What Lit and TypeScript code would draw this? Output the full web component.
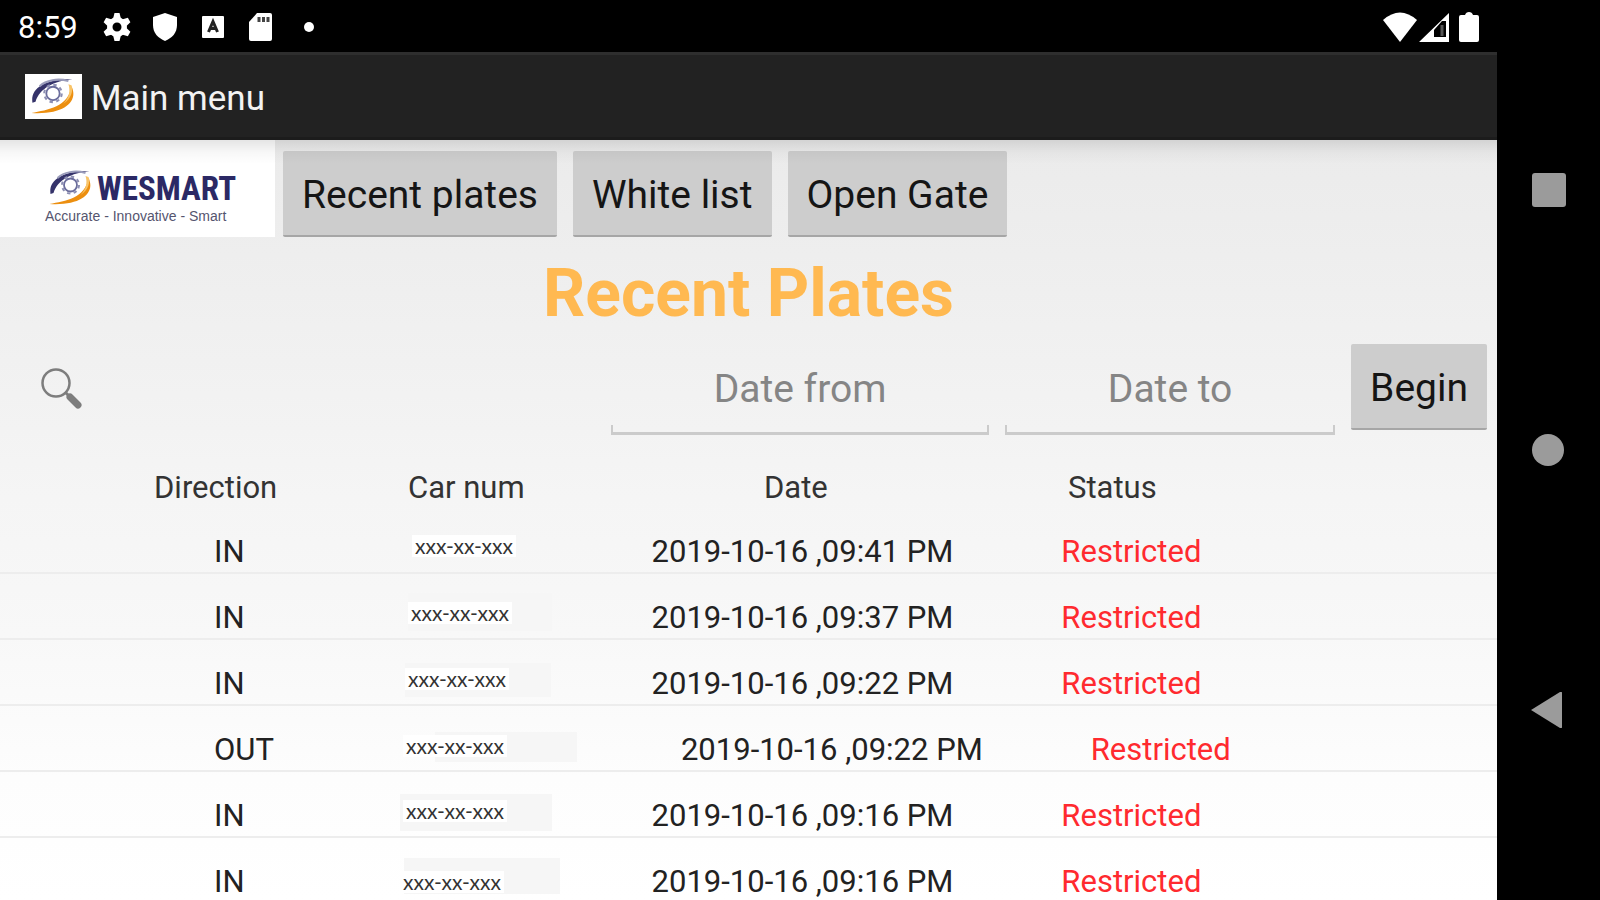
import { LitElement, html, css, svg } from "lit";
import { customElement, property } from "lit/decorators.js";
import { styleMap } from "lit/directives/style-map.js";

interface Plate {
  direction: string;
  plate: string;
  date: string;
  status: string;
  /* label: left/top of the masked number; patch: left, top, width, height of the mask */
  label: [number, number];
  patch: [number, number, number, number];
}

const MASK = "xxx-xx-xxx";

const PLATES: Plate[] = [
  { direction: "IN", plate: MASK, date: "2019-10-16 ,09:41 PM", status: "Restricted", label: [412, 27], patch: [412, 27, 97, 22] },
  { direction: "IN", plate: MASK, date: "2019-10-16 ,09:37 PM", status: "Restricted", label: [408, 28], patch: [408, 19, 144, 38] },
  { direction: "IN", plate: MASK, date: "2019-10-16 ,09:22 PM", status: "Restricted", label: [405, 28], patch: [405, 23, 146, 34] },
  { direction: "OUT", plate: MASK, date: "2019-10-16 ,09:22 PM", status: "Restricted", label: [403, 29], patch: [435, 26, 142, 30] },
  { direction: "IN", plate: MASK, date: "2019-10-16 ,09:16 PM", status: "Restricted", label: [403, 28], patch: [400, 22, 152, 37] },
  { direction: "IN", plate: MASK, date: "2019-10-16 ,09:16 PM", status: "Restricted", label: [400, 33], patch: [404, 20, 156, 36] },
];

const eye = svg`
  <path d="M1 24C-1 11 11 1 40 1C22 3 8 10 4 23Z" fill="#35336a"/>
  <path d="M8 8C14 2 26 0 36 3" fill="none" stroke="#9b9dbb" stroke-width="2"/>
  <circle cx="21" cy="15" r="8.500" fill="none" stroke="#8d8fb3" stroke-width="2" stroke-dasharray="3.340 3.340"/>
  <circle cx="21" cy="15" r="6.500" fill="none" stroke="#6b6d9c" stroke-width="1.800"/>
  <path d="M39 8C46 22 33 36 0 34C16 31 36 28 39 8Z" fill="#ec8f10"/>
  <path d="M36 6C38 12 37 19 31 25C39 20 41 12 39 7Z" fill="#f8c468"/>`;

@customElement("plate-table")
class PlateTable extends LitElement {
  @property({ attribute: false }) rows: Plate[] = [];

  static styles = css`
    :host { display: block; }
    table, thead, tbody { display: block; }
    tr { display: flex; position: relative; }
    th, td { padding: 0; font-size: 31px; line-height: 36px; font-weight: 400; text-align: left; white-space: nowrap; }
    thead tr { padding: 0 0 0 154px; height: 38px; color: #333; }
    .h-direction { width: 254px; }
    .h-car { width: 356px; }
    .h-date { width: 304px; }
    tbody tr { padding: 26px 0 2px 214px; border-bottom: 2px solid #ededed; color: #222; }
    .car { width: 407px; }
    .date { margin-right: 108px; }
    .status { color: #ff2a2f; }
    .patch { position: absolute; background: #f6f6f6; }
    .mask { position: absolute; padding: 0 3px; background: #fff; color: #333; font: 21px/22px Lato, sans-serif; }
  `;

  render() {
    return html`<table>
      <thead>
        <tr>
          <th class="h-direction">Direction</th>
          <th class="h-car">Car num</th>
          <th class="h-date">Date</th>
          <th>Status</th>
        </tr>
      </thead>
      <tbody>
        ${this.rows.map(
          (r) => html`<tr>
            <td>${r.direction}</td>
            <td class="car">
              <span class="patch" style=${styleMap({ left: `${r.patch[0]}px`, top: `${r.patch[1]}px`, width: `${r.patch[2]}px`, height: `${r.patch[3]}px` })}></span>
              <span class="mask" style=${styleMap({ left: `${r.label[0]}px`, top: `${r.label[1]}px` })}>${r.plate}</span>
            </td>
            <td class="date">${r.date}</td>
            <td class="status">${r.status}</td>
          </tr>`
        )}
      </tbody>
    </table>`;
  }
}

@customElement("app-root")
class AppRoot extends LitElement {
  static styles = css`
    :host { display: flex; height: 100vh; overflow: hidden; background: #000; font-family: Roboto, sans-serif; }
    * { box-sizing: border-box; }
    svg { display: block; }
    button, input { font: inherit; margin: 0; border: 0; border-radius: 0; }
    .screen { flex: 1; min-width: 0; display: flex; flex-direction: column; }
    .status-bar { flex: none; height: 52px; padding: 2px 18px 0; display: flex; align-items: center; color: #fff; font-size: 31px; line-height: 36px; }
    .clock { padding-top: 2px; }
    .notices { display: flex; gap: 20px; margin-left: 25px; }
    .signals { display: flex; align-items: center; gap: 2px; margin-left: auto; }
    .battery { margin-left: 8px; }
    .action-bar { flex: none; height: 88px; padding: 0 25px; display: flex; align-items: center; gap: 9px; background: #222; border-top: 3px solid #2e2e2e; border-bottom: 3px solid #1c1c1c; color: #f3f3f3; }
    .app-icon { width: 57px; height: 45px; padding: 4px 6px; background: #fff; }
    .app-name { margin: 0; padding-top: 6px; font-size: 35px; line-height: 40px; font-weight: 400; }
    .content { flex: 1; min-height: 0; overflow: hidden; position: relative; background: linear-gradient(#ebebeb, #efefef 20%, #f5f5f5 47%, #f8f8f8 65%, #fdfdfd 84%, #fff); }
    .content::before { content: ""; position: absolute; z-index: 1; inset: 0 0 auto; height: 24px; background: linear-gradient(rgba(0,0,0,.1), rgba(0,0,0,.03) 50%, transparent); pointer-events: none; }
    .toolbar { display: flex; align-items: flex-end; }
    .brand { width: 275px; height: 97px; margin-right: 8px; padding: 29px 0 0 45px; background: #fff; color: #2b2965; }
    .brand-top { display: flex; align-items: flex-end; gap: 4px; padding-left: 4px; height: 37px; }
    .brand-name { font: 700 33px/34px "Liberation Sans Narrow", "Roboto Condensed", Roboto, sans-serif; }
    .tagline { margin: 2px 0 0; font: 14px/16px "Liberation Sans", sans-serif; color: #55556f; white-space: nowrap; }
    .tabs { display: flex; gap: 16px; }
    .btn { height: 86px; padding: 4px 19px 0; background: #cdcdcd; border-bottom: 2px solid #a6a6a6; border-radius: 2px; color: #151515; font-size: 39px; line-height: 44px; white-space: nowrap; }
    h2 { margin: 18px 0 0; text-align: center; color: #ffb951; font-size: 66px; line-height: 78px; font-weight: 700; }
    .filters { display: flex; align-items: flex-start; gap: 16px; margin-top: 11px; padding-right: 10px; }
    .search { display: block; padding: 24px 41px; background: none; }
    .from { margin-left: auto; width: 378px; }
    .to { width: 330px; }
    .from, .to { height: 91px; padding: 2px 0 0; outline: 0; text-align: center; font-size: 39px; line-height: 44px; color: #222; border-bottom: 3px solid #cbcbcb;
      background: linear-gradient(#cbcbcb, #cbcbcb) left bottom / 2px 7px no-repeat, linear-gradient(#cbcbcb, #cbcbcb) right bottom / 2px 7px no-repeat; }
    input::placeholder { color: #858585; opacity: 1; }
    plate-table { margin-top: 35px; }
    .nav { flex: none; width: 103px; display: flex; flex-direction: column; align-items: center; justify-content: center; gap: 224px; }
    .nav button { padding: 0; background: none; }
  `;

  render() {
    return html`
      <div class="screen">
        <div class="status-bar">
          <span class="clock">8:59</span>
          <div class="notices">
            <svg width="28" height="28" viewBox="0 0 28 28"><g fill="#fff"><path fill-rule="evenodd" d="M14 4a10 10 0 1 0 0 20a10 10 0 0 0 0-20zm0 5.500a4.500 4.500 0 1 1 0 9a4.500 4.500 0 0 1 0-9z"/>${[0, 60, 120, 180, 240, 300].map((a) => svg`<path d="M11.500 0h5l1.500 6h-8z" transform="rotate(${a} 14 14)"/>`)}</g></svg>
            <svg width="28" height="28" viewBox="0 0 28 28"><path fill="#fff" d="M14 0l12 4v8c0 8-5 13-12 16C7 25 2 20 2 12V4z"/></svg>
            <svg width="28" height="28" viewBox="0 0 28 28"><rect x="3" y="3" width="22" height="22" rx="1" fill="#fff"/><path d="M9.500 19L14 8.500l4.500 10.500M11 15.500h6" fill="none" stroke="#222" stroke-width="3"/></svg>
            <svg width="28" height="28" viewBox="0 0 28 28"><path fill="#fff" d="M10 0h13q2 0 2 2v24q0 2-2 2H4q-2 0-2-2V9z"/><path d="M12 4v5M16.500 4v5M21 4v5" stroke="#444" stroke-width="3"/></svg>
            <svg width="28" height="28" viewBox="0 0 28 28"><circle cx="14" cy="14" r="5" fill="#fff"/></svg>
          </div>
          <div class="signals">
            <svg width="34" height="30" viewBox="0 0 34 30"><path fill="#fff" d="M17 30L0 8Q17-7 34 8z"/></svg>
            <svg width="30" height="30" viewBox="0 0 30 30"><path fill="#fff" fill-rule="evenodd" d="M0 30L30 1v29zM15 25v-7l8-9h4v16z"/><path d="M23 13v11" stroke="#555" stroke-width="3"/></svg>
            <svg class="battery" width="20" height="30" viewBox="0 0 20 30"><path fill="#fff" d="M6 3q1-3 4-3t4 3h4q2 0 2 2v23q0 2-2 2H2q-2 0-2-2V5q0-2 2-2z"/></svg>
          </div>
        </div>
        <header class="action-bar">
          <svg class="app-icon" viewBox="0 0 43 36">${eye}</svg>
          <h1 class="app-name">Main menu</h1>
        </header>
        <main class="content">
          <div class="toolbar">
            <div class="brand">
              <div class="brand-top">
                <svg width="44" height="36" viewBox="0 0 43 36">${eye}</svg>
                <span class="brand-name">WESMART</span>
              </div>
              <p class="tagline">Accurate - Innovative - Smart</p>
            </div>
            <nav class="tabs">
              <button class="btn">Recent plates</button>
              <button class="btn">White list</button>
              <button class="btn">Open Gate</button>
            </nav>
          </div>
          <h2>Recent Plates</h2>
          <form class="filters" @submit=${(e: Event) => e.preventDefault()}>
            <button class="search" type="button" aria-label="Search">
              <svg width="42" height="42" viewBox="0 0 42 42" fill="none" stroke="#7d7d7d"><circle cx="15" cy="15" r="13.500" stroke-width="2.500"/><path d="M24 24l5 5" stroke-width="3"/><path d="M29 29l8 8" stroke-width="7" stroke-linecap="round"/></svg>
            </button>
            <input class="from" type="text" placeholder="Date from" aria-label="Date from" />
            <input class="to" type="text" placeholder="Date to" aria-label="Date to" />
            <button class="btn" type="submit">Begin</button>
          </form>
          <plate-table .rows=${PLATES}></plate-table>
        </main>
      </div>
      <nav class="nav">
        <button aria-label="Overview"><svg width="36" height="36"><rect x="1" y="1" width="34" height="34" rx="3" fill="#9b9b9b"/></svg></button>
        <button aria-label="Home"><svg width="36" height="36"><circle cx="17" cy="18" r="16" fill="#9b9b9b"/></svg></button>
        <button aria-label="Back"><svg width="36" height="36"><path d="M0 18L29 0q2-1 2 1v34q0 2-2 1z" fill="#9b9b9b"/></svg></button>
      </nav>
    `;
  }
}
